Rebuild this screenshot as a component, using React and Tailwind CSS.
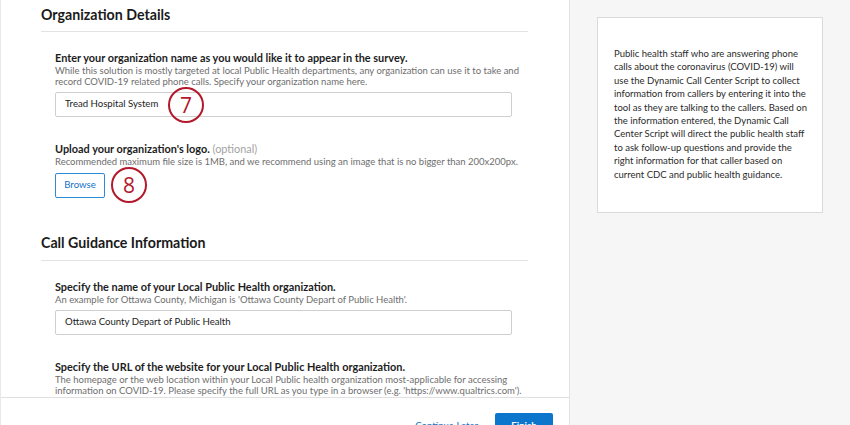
import React from "react";

function Marker({ n, className }) {
  return (
    <div
      className={`absolute w-[36px] h-[36px] rounded-full border-[2.5px] border-[#b3182b] flex items-center justify-center text-[#b3182b] text-[21px] leading-none ${className}`}
      style={{ fontFamily: "'Open Sans', sans-serif" }}
    >
      {n}
    </div>
  );
}

function Field({ label, optional, desc, children }) {
  return (
    <div>
      <div className="text-[10.9px] leading-[14px] font-bold text-[#1d1d1d]">
        {label}
        {optional && <span className="font-normal text-[#a3a3a3]"> {optional}</span>}
      </div>
      <div className="text-[9.5px] leading-[10.5px] text-[#6e6e6e] mt-[1px]">{desc}</div>
      {children}
    </div>
  );
}

function Input({ value }) {
  return (
    <div className="mt-[5px] w-[457px] h-[25px] border border-[#cfcfcf] rounded-[2px] flex items-center px-[9px] text-[9.6px] text-[#222]">
      {value}
    </div>
  );
}

export default function App() {
  return (
    <div
      className="w-[850px] h-[425px] flex overflow-hidden bg-white"
      style={{ fontFamily: "Lato, 'Open Sans', sans-serif" }}
    >
      {/* left form column */}
      <div className="relative w-[570px] h-full flex flex-col border-r border-[#e2e2e2] border-l border-l-[#e8e8e8]">
        <div className="h-[397px] shrink-0 overflow-hidden pl-[40px] pr-[41px]">
          <h2 className="text-[14.2px] font-bold text-[#1a1a1a] leading-[18px] pt-[6px] pb-[7px] border-b border-[#e3e3e3]">
            Organization Details
          </h2>

          <div className="pl-[14px] pt-[19px]">
            <Field
              label="Enter your organization name as you would like it to appear in the survey."
              desc={
                <>
                  While this solution is mostly targeted at local Public Health departments, any organization can use it to take and
                  <br />
                  record COVID-19 related phone calls. Specify your organization name here.
                </>
              }
            >
              <Input value="Tread Hospital System" />
            </Field>

            <div className="mt-[25px]">
              <Field
                label="Upload your organization's logo."
                optional="(optional)"
                desc="Recommended maximum file size is 1MB, and we recommend using an image that is no bigger than 200x200px."
              >
                <button className="mt-[5px] w-[50px] h-[25px] border border-[#2d8ad6] rounded-[2px] text-[#1373c6] text-[9.6px]">
                  Browse
                </button>
              </Field>
            </div>
          </div>

          <h2 className="mt-[36px] text-[14.2px] font-bold text-[#1a1a1a] leading-[18px] pb-[8px] border-b border-[#e3e3e3]">
            Call Guidance Information
          </h2>

          <div className="pl-[14px] pt-[19px]">
            <Field
              label="Specify the name of your Local Public Health organization."
              desc="An example for Ottawa County, Michigan is 'Ottawa County Depart of Public Health'."
            >
              <Input value="Ottawa County Depart of Public Health" />
            </Field>

            <div className="mt-[25px]">
              <Field
                label="Specify the URL of the website for your Local Public Health organization."
                desc={
                  <>
                    The homepage or the web location within your Local Public health organization most-applicable for accessing
                    <br />
                    information on COVID-19. Please specify the full URL as you type in a browser (e.g. 'https://www.qualtrics.com').
                  </>
                }
              />
            </div>
          </div>
        </div>

        {/* footer */}
        <div className="flex-1 overflow-hidden border-t border-[#e0e0e0] flex justify-end items-start pt-[15px] pr-[16px] gap-[17px]">
          <span className="text-[9.6px] text-[#1373c6] mt-[6px] shrink-0">Continue Later</span>
          <button className="w-[58px] h-[26px] shrink-0 bg-[#0b76cc] rounded-[2px] text-white text-[9.6px] font-bold">
            Finish
          </button>
        </div>

        <Marker n="7" className="left-[167px] top-[87px]" />
        <Marker n="8" className="left-[110px] top-[167px]" />
      </div>

      {/* right info panel */}
      <div className="flex-1 bg-[#f6f6f6] pl-[27px] pt-[17px]">
        <div className="w-[226px] h-[196px] bg-white border border-[#dadada] pl-[16px] pr-[12px] pt-[29px]">
          <p className="text-[9.5px] leading-[13.4px] text-[#2a2a2a]">
            Public health staff who are answering phone calls about the coronavirus (COVID-19) will use the Dynamic Call Center Script to collect information from callers by entering it into the tool as they are talking to the callers. Based on the information entered, the Dynamic Call Center Script will direct the public health staff to ask follow-up questions and provide the right information for that caller based on current CDC and public health guidance.
          </p>
        </div>
      </div>
    </div>
  );
}
